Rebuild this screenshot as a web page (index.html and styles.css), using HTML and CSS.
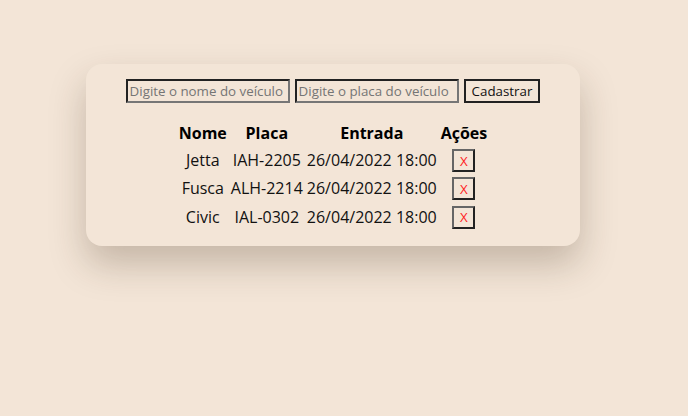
FILE: index.html
```html
<!DOCTYPE html>
<html lang="pt-BR">
<head>
<meta charset="utf-8">
<title>Estacionamento</title>
<link rel="stylesheet" href="styles.css">
</head>
<body>
<main class="card">
  <form class="form">
    <input class="field" type="text" placeholder="Digite o nome do veículo">
    <input class="field" type="text" placeholder="Digite o placa do veículo">
    <button class="btn" type="button">Cadastrar</button>
  </form>
  <table class="table">
    <thead>
      <tr><th>Nome</th><th>Placa</th><th>Entrada</th><th>Ações</th></tr>
    </thead>
    <tbody>
      <tr><td>Jetta</td><td>IAH-2205</td><td>26/04/2022 18:00</td><td><button class="del" type="button">X</button></td></tr>
      <tr><td>Fusca</td><td>ALH-2214</td><td>26/04/2022 18:00</td><td><button class="del" type="button">X</button></td></tr>
      <tr><td>Civic</td><td>IAL-0302</td><td>26/04/2022 18:00</td><td><button class="del" type="button">X</button></td></tr>
    </tbody>
  </table>
</main>
</body>
</html>
```
FILE: styles.css
```css
html {
  background: #f3e5d7;
}
body {
  margin: 0;
  padding: 64px 0 0 86px;
  min-height: 100vh;
  box-sizing: border-box;
  font-family: "Open Sans", "Liberation Sans", sans-serif;
  color: #111;
}
.card {
  box-sizing: border-box;
  width: 494px;
  padding: 15px 0 14px;
  border-radius: 16px;
  background: #f3e5d7;
  box-shadow: 0 18px 36px rgba(60, 40, 20, 0.25);
  display: flex;
  flex-direction: column;
  align-items: center;
  gap: 16px;
}
.form {
  display: flex;
  gap: 5px;
  margin: 0;
}
.field {
  box-sizing: border-box;
  width: 164px;
  height: 24px;
  padding: 1px 2px;
  background: transparent;
  border: 2px solid;
  border-color: #222 #767676 #767676 #222;
  font-family: "Open Sans", sans-serif;
  font-size: 13.33px;
  color: #111;
}
.field::placeholder {
  color: #757575;
}
.btn {
  box-sizing: border-box;
  height: 24px;
  padding: 1px 6px;
  background: transparent;
  border: 2px solid #222;
  font-family: "Open Sans", sans-serif;
  font-size: 13.33px;
  color: #111;
}
.table {
  border-spacing: 2px;
  font-size: 16px;
}
.table th {
  font-weight: 700;
  color: #000;
  padding: 1px;
}
.table td {
  text-align: center;
  padding: 1px;
}
.del {
  box-sizing: border-box;
  width: 23px;
  height: 23px;
  padding: 0;
  background: transparent;
  border: 2px solid;
  border-color: #666 #222 #222 #666;
  color: #f22;
  font-family: "Open Sans", sans-serif;
  font-size: 13.33px;
  vertical-align: middle;
}
```
